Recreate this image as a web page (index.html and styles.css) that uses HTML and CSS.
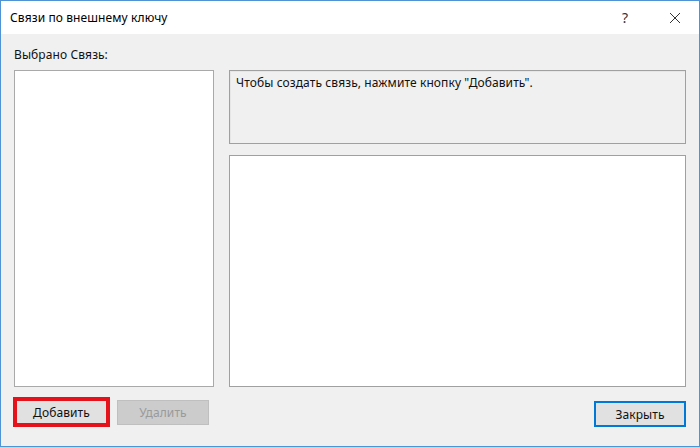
FILE: index.html
```html
<!DOCTYPE html>
<html lang="ru">
<head>
  <meta charset="UTF-8" />
  <title>Связи по внешнему ключу</title>
  <link rel="stylesheet" href="styles.css">
</head>
<body>
  <div class="window">
    <div class="titlebar">
      <div class="title">Связи по внешнему ключу</div>
      <div class="title-btns">
        <span class="help-btn">?</span>
        <span class="close-btn">
          <svg width="12" height="12" viewBox="0 0 12 12"><path d="M1 1L11 11M11 1L1 11" stroke="#333" stroke-width="1" fill="none"/></svg>
        </span>
      </div>
    </div>

    <div class="content">
      <div class="label">Выбрано Связь:</div>
      <div class="panes">
        <div class="list"></div>
        <div class="right">
          <div class="info">Чтобы создать связь, нажмите кнопку "Добавить".</div>
          <div class="detail"></div>
        </div>
      </div>
      <div class="actions">
        <div class="left-actions">
          <div class="highlight"><button class="btn">Добавить</button></div>
          <button class="btn" disabled>Удалить</button>
        </div>
        <button class="btn btn-default">Закрыть</button>
      </div>
    </div>
  </div>
</body>
</html>
```

FILE: styles.css
```css
* { margin: 0; padding: 0; box-sizing: border-box; }
body {
  font-family: "Noto Sans", "Open Sans", sans-serif;
  font-size: 12px; color: #111; letter-spacing: 0.1px;
  background: #fff;
}
.window { width: 700px; height: 447px; border: 1px solid #4f93d4;
  background: #f0f0f0; display: flex; flex-direction: column;
}
.titlebar { height: 33px; background: #fff; display: flex; align-items: center;
  justify-content: space-between; padding-left: 9px;
}
.title { font-size: 12px; color: #000; }
.title-btns { display: flex; align-items: center; height: 100%; }
.help-btn { width: 46px; margin-right: 4px; text-align: center; font-size: 14px; color: #333; }
.close-btn { width: 46px; display: flex; justify-content: center; align-items: center; margin-right: 1px; }
.content { flex: 1; padding: 13px 13px 0; }
.label { height: 23px; line-height: 16px; }
.panes { display: flex; gap: 15px; height: 317px; }
.list { width: 200px; background: #fff; border: 1px solid #a9a9a9; }
.right { flex: 1; display: flex; flex-direction: column; gap: 11px; }
.info { height: 74px; border: 1px solid #a0a0a0; box-shadow: inset 1px 1px 0 #e6e6e6;
  padding: 4px 6px; line-height: 16px;
}
.detail { flex: 1; background: #fff; border: 1px solid #a0a0a0; }
.actions { display: flex; justify-content: space-between; align-items: flex-start; margin-top: 10px; }
.left-actions { display: flex; align-items: center; gap: 7px; margin-left: -1px; }
.highlight { border: 4px solid #e5121c; width: 97px; height: 30px; display: flex; }
.highlight .btn { width: 100%; height: 100%; border: none; }
.btn { font-family: inherit; font-size: 12px; letter-spacing: inherit; color: #111; width: 92px; height: 25px;
  background: #e1e1e1; border: 1px solid #adadad;
}
.btn:disabled { background: #cccccc; border-color: #bfbfbf; color: #9a9a9a; }
.btn-default { height: 26px; margin-top: 4px; border: 2px solid #0078d7; }
```
